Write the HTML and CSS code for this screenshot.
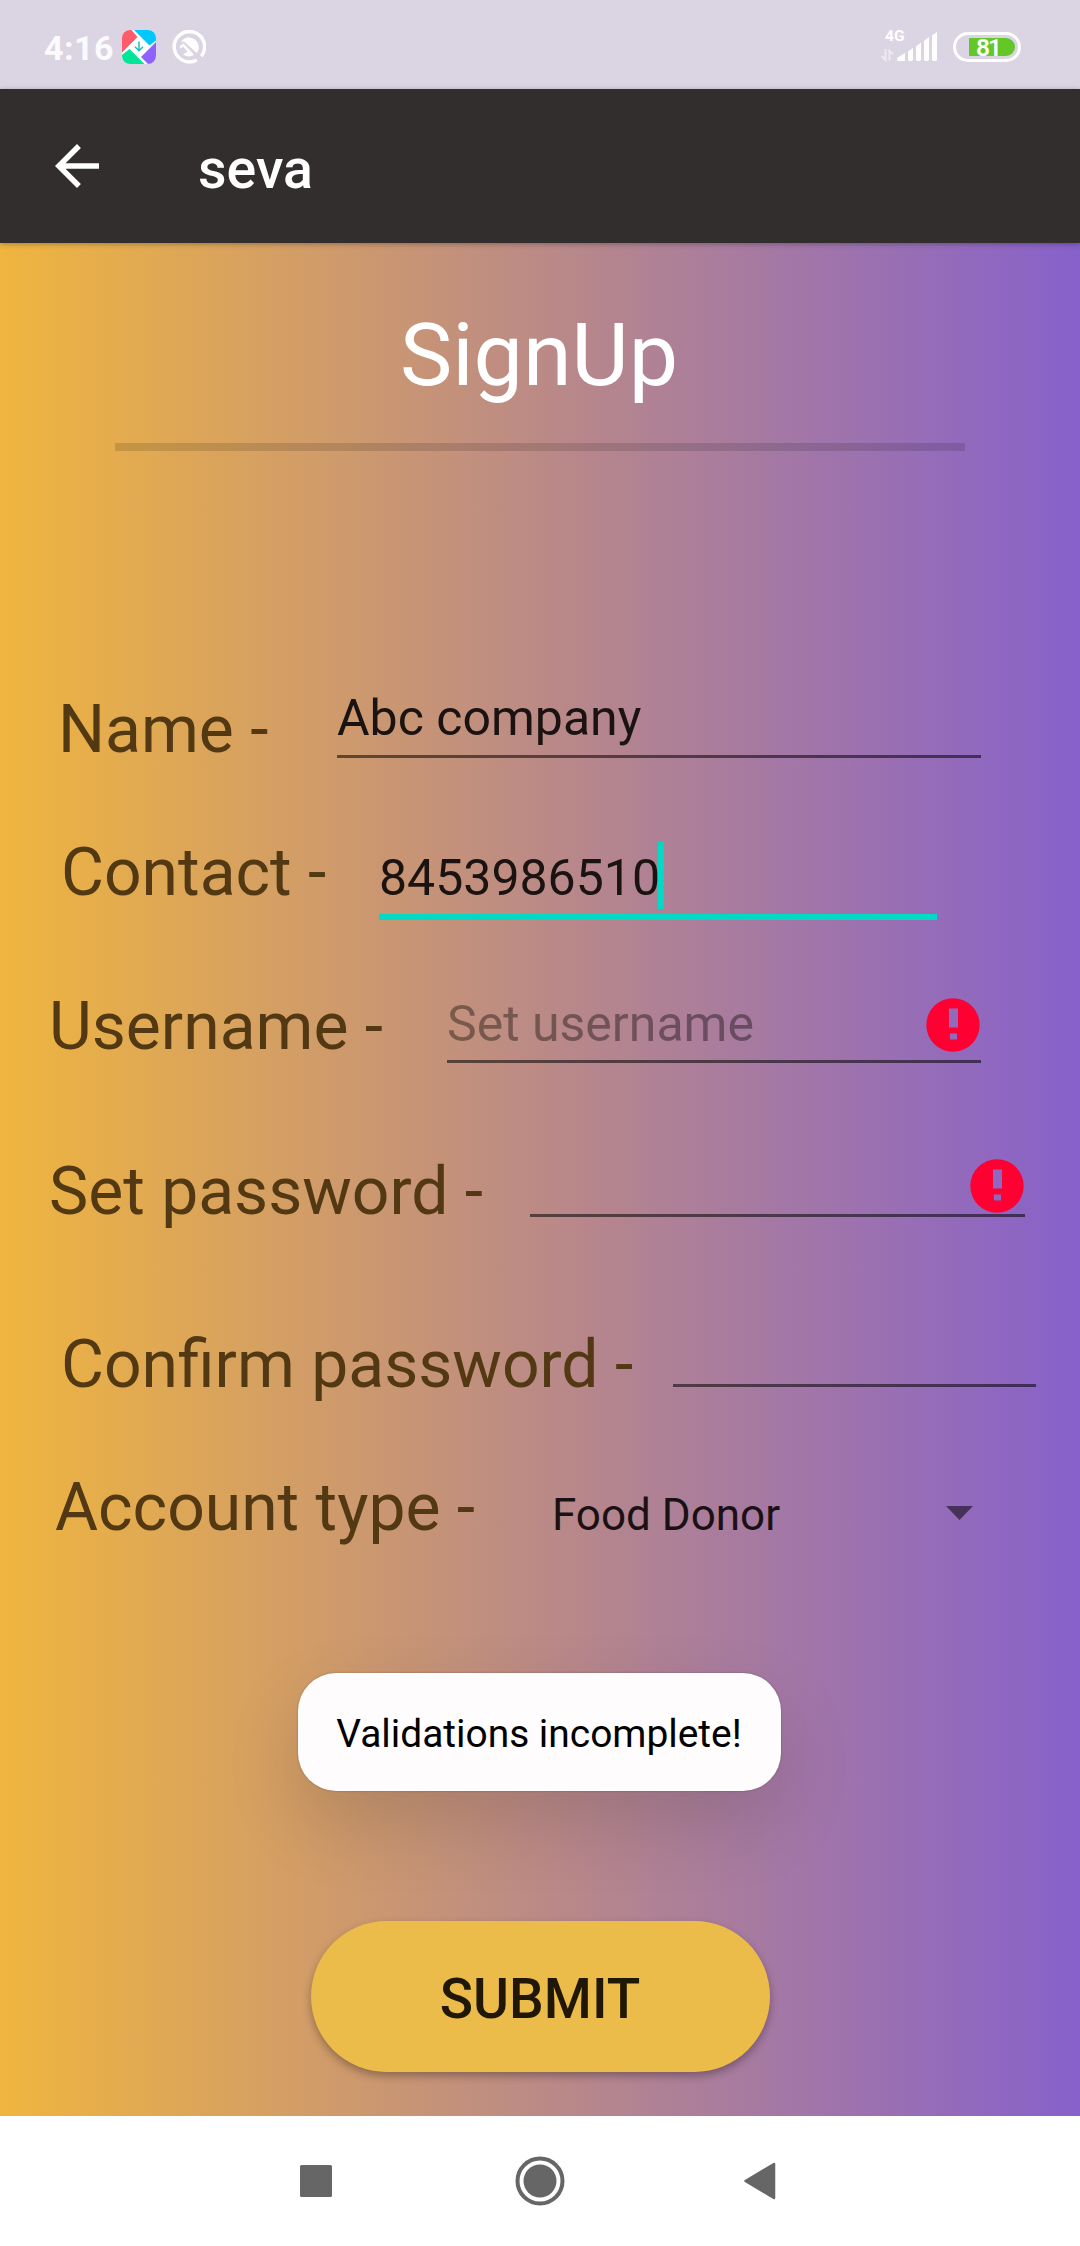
FILE: index.html
```html
<!DOCTYPE html>
<html lang="en">
<head>
<meta charset="utf-8">
<title>seva</title>
<link rel="stylesheet" href="styles.css">
</head>
<body>
<div class="statusbar">
  <span class="clock">4:16</span>
  <svg class="app-badge" width="34" height="34" viewBox="0 0 34 34">
    <defs><clipPath id="badge"><rect width="34" height="34" rx="8"/></clipPath></defs>
    <g clip-path="url(#badge)">
      <rect width="34" height="34" fill="#fff"/>
      <path d="M0 0H9.500L15.500 7 0 22.500Z" fill="#ff5b6b"/>
      <path d="M12 0H34V10.500L27.500 15.500Z" fill="#00c8ff"/>
      <path d="M34 12V34H26L19 27Z" fill="#8f62ff"/>
      <path d="M0 25L7.500 19 22.500 34H0Z" fill="#00e696"/>
      <path d="M17 11.500V20.500M13 16.800L17 20.800 21 16.800" fill="none" stroke="#18c5b5" stroke-width="1.500"/>
    </g>
  </svg>
  <svg class="search-badge" width="34" height="34" viewBox="0 0 34 34">
    <path d="M24.800 30A15.200 15.200 0 1 1 29.300 26.200" fill="none" stroke="#fff" stroke-width="3.400"/>
    <path d="M9.500 11.500A9.300 9.300 0 0 1 24.800 22.800L12 11.300Z" fill="#fff"/>
    <path d="M9.500 11.500L12 11.300 24.800 22.800A9.500 9.500 0 0 0 20 8.200A9.500 9.500 0 0 0 9.500 11.500Z" fill="#fff"/>
    <path d="M7.800 18.500L8 16 11.500 13.500 22 24.800A9.500 9.500 0 0 1 11 24.200L15.500 22 11.500 16.800Z" fill="#fff"/>
  </svg>
  <div class="network">
    <span class="network-type">4G</span>
    <svg width="58" height="30" viewBox="0 0 58 30">
      <path d="M5.500 17V28L1.500 24M9.500 28.500V19L13 22" fill="none" stroke="#edeaf2" stroke-width="2"/>
      <path d="M17 26L25 21V29H18.500Q17 29 17 27ZM28 19.500L33 16V28L32 29H29L28 28ZM36 14.500L41 10.500V28L40 29H37L36 28ZM44 9L49 5V28L48 29H45L44 28ZM52 3.500L57 0V28L56 29H53L52 28Z" fill="#fff"/>
    </svg>
  </div>
  <div class="battery"><span class="battery-level">81</span></div>
</div>

<header class="appbar">
  <svg width="44" height="44" viewBox="4 4 16 16"><path d="M20 11H7.830l5.590-5.590L12 4l-8 8 8 8 1.410-1.410L7.830 13H20z" fill="#fff"/></svg>
  <span class="app-title">seva</span>
</header>

<main class="screen">
  <h1 class="heading">SignUp</h1>
  <div class="divider"></div>

  <form class="form">
    <div class="row row-name"><label class="label">Name -</label><div class="field">Abc company</div></div>
    <div class="row row-contact"><label class="label">Contact -</label><div class="field field-active">8453986510<i class="caret"></i></div></div>
    <div class="row row-username"><label class="label">Username -</label><div class="field"><span class="hint">Set username</span>
      <svg class="error" width="54" height="54" viewBox="0 0 54 54"><path fill="#ff0033" fill-rule="evenodd" d="M27 .300a26.700 26.700 0 1 0 0 53.400a26.700 26.700 0 1 0 0-53.400ZM23 10.500H32V29.500H23ZM24 35.500H31V41.500H24Z"/></svg></div></div>
    <div class="row row-password"><label class="label">Set password -</label><div class="field">
      <svg class="error" width="54" height="54" viewBox="0 0 54 54"><path fill="#ff0033" fill-rule="evenodd" d="M27 .300a26.700 26.700 0 1 0 0 53.400a26.700 26.700 0 1 0 0-53.400ZM23 10.500H32V29.500H23ZM24 35.500H31V41.500H24Z"/></svg></div></div>
    <div class="row row-confirm"><label class="label">Confirm password -</label><div class="field"></div></div>
    <div class="row row-account"><label class="label">Account type -</label>
      <div class="select"><span>Food Donor</span><svg width="27" height="14" viewBox="0 0 27 14"><path d="M0 0H27L13.500 14Z" fill="#47305a"/></svg></div></div>
  </form>

  <div class="toast">Validations incomplete!</div>
  <button class="submit" type="button">SUBMIT</button>
</main>

<nav class="navbar">
  <svg width="50" height="50" viewBox="0 0 50 50"><rect x="9" y="9" width="32" height="32" rx="1.500" fill="#666"/></svg>
  <svg width="50" height="50" viewBox="0 0 50 50"><circle cx="25" cy="25" r="22.500" fill="none" stroke="#666" stroke-width="4"/><circle cx="25" cy="25" r="16.500" fill="#666"/></svg>
  <svg width="50" height="50" viewBox="0 0 50 50"><path d="M10.500 25L39 8V42Z" fill="#666" stroke="#666" stroke-width="2.500" stroke-linejoin="round"/></svg>
</nav>
</body>
</html>
```

FILE: styles.css
```css
* { box-sizing: border-box; }

body {
  margin: 0;
  width: 1080px;
  height: 2246px;
  display: flex;
  flex-direction: column;
  font-family: Roboto, sans-serif;
  background: #fff;
  overflow: hidden;
}

svg { display: block; flex: none; }

.statusbar {
  height: 89px;
  flex: none;
  display: flex;
  align-items: flex-start;
  padding: 30px 59px 0 44px;
  background: #dbd5e3;
  color: #fff;
}
.clock { width: 78px; font-size: 34px; font-weight: 700; line-height: 36px; letter-spacing: .5px; color: #fbfafd; }
.search-badge { margin-left: 16px; }
.network { margin-left: auto; width: 58px; display: flex; flex-direction: column; }
.network-type { height: 2px; margin-left: 5px; font-size: 15.5px; font-weight: 700; line-height: 13px; }
.battery {
  width: 68px;
  height: 30px;
  margin: 2px 0 0 15px;
  padding: 3px;
  border: 3px solid #fff;
  border-radius: 15px;
}
.battery-level {
  display: block;
  width: 46px;
  height: 18px;
  margin-left: 10px;
  padding-left: 7px;
  background: #63c727;
  border-radius: 1px 9px 9px 1px;
  font-size: 24.5px;
  font-weight: 600;
  line-height: 19px;
  letter-spacing: -2px;
}

.appbar {
  height: 154px;
  flex: none;
  display: flex;
  align-items: center;
  padding: 0 55px;
  background: #322e2d;
  color: #fff;
  box-shadow: 0 1px 5px rgba(0, 0, 0, .3);
  z-index: 1;
}
.app-title { margin: 7px 0 0 99px; font-size: 55.5px; font-weight: 500; line-height: 64px; }

.screen {
  height: 1873px;
  flex: none;
  display: flex;
  flex-direction: column;
  align-items: center;
  background: linear-gradient(90deg, #efb53f 0%, #bb8a86 50%, #8761cb 100%);
}
.heading { margin: 60px 2px 0 0; font-size: 88px; font-weight: 400; line-height: 104px; color: #fff; }
.divider { width: 850px; height: 8px; margin-top: 36px; background: rgba(0, 0, 0, .13); }

.form { width: 100%; margin-top: 238px; }
.row { display: flex; align-items: flex-start; }
.label { flex: none; padding-left: 1px; font-size: 66px; line-height: 82px; color: #523913; white-space: nowrap; }
.field {
  display: flex;
  justify-content: space-between;
  height: 69px;
  border-bottom: 3px solid rgba(0, 0, 0, .54);
  font-size: 50px;
  line-height: 58px;
  color: #1b1311;
}
.field-active { justify-content: flex-start; border-bottom: 6px solid #03dac5; }
.caret { width: 6px; height: 67px; margin: -7px 0 0 -2px; background: #03dac5; }
.hint { color: rgba(0, 0, 0, .38); }
.error { margin-left: auto; }

.row-name { height: 143px; padding-left: 57px; }
.row-name .label { width: 280px; }
.row-name .field { width: 644px; }

.row-contact { height: 154px; padding-left: 60px; }
.row-contact .label { width: 319px; }
.row-contact .field { width: 558px; height: 71px; margin-top: 17px; }

.row-username { height: 165px; padding-left: 48px; }
.row-username .label { width: 399px; }
.row-username .field { width: 534px; height: 68px; margin-top: 9px; padding-right: 1px; }
.row-username .error { margin-top: 3px; }

.row-password { height: 173px; padding-left: 48px; }
.row-password .label { width: 482px; }
.row-password .field { width: 495px; height: 66px; padding-right: 1px; }
.row-password .error { margin-top: 8px; }

.row-confirm { height: 143px; padding-left: 60px; }
.row-confirm .label { width: 613px; }
.row-confirm .field { width: 363px; height: 63px; }

.row-account { height: 80px; padding-left: 54px; }
.row-account .label { width: 498px; }
.select {
  width: 421px;
  height: 80px;
  margin-top: 8px;
  display: flex;
  align-items: center;
  justify-content: space-between;
  font-size: 44px;
  line-height: 80px;
  color: #1b1114;
}
.select svg { margin-top: -5px; }

.toast {
  width: 483px;
  height: 118px;
  margin: 126px 2px 0 0;
  padding-top: 3px;
  border-radius: 38px;
  background: #fefcfc;
  box-shadow: 0 32px 76px rgba(0, 0, 0, .13), 0 0 2px rgba(0, 0, 0, .3);
  font-size: 38.9px;
  line-height: 116px;
  text-align: center;
  color: #000;
}
.submit {
  width: 459px;
  height: 151px;
  margin-top: 130px;
  padding: 5px 0 0;
  border: 0;
  border-radius: 76px;
  background: #ebbc4a;
  box-shadow: 0 4px 8px rgba(0, 0, 0, .3);
  font: 500 55px/64px Roboto, sans-serif;
  color: #211707;
}

.navbar {
  height: 130px;
  flex: none;
  display: flex;
  align-items: center;
  gap: 174px;
  padding-left: 291px;
  background: #fff;
}
.navbar svg:last-child { margin-left: -4px; }
```
